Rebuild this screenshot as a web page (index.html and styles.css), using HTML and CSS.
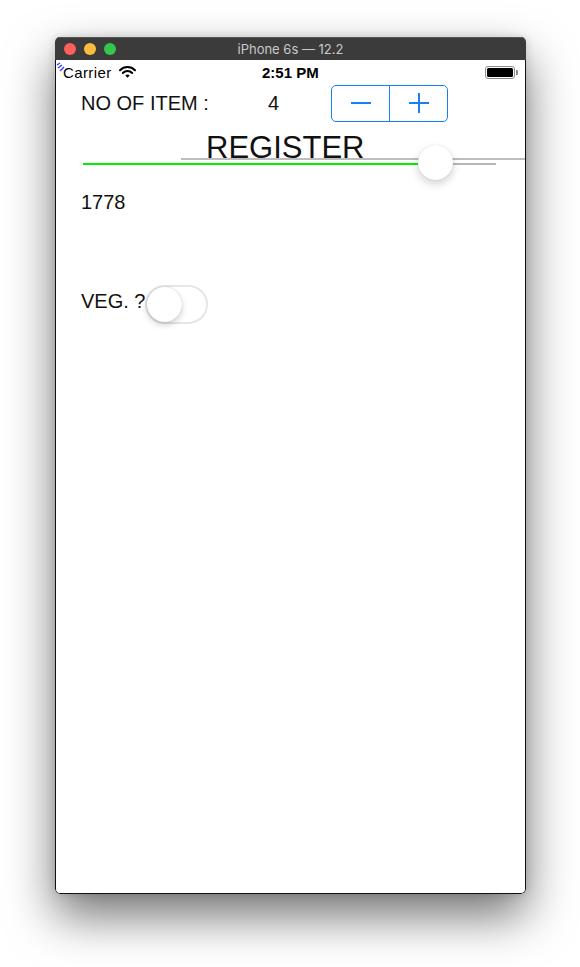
FILE: index.html
```html
<!DOCTYPE html>
<html>
<head>
<meta charset="utf-8">
<link rel="stylesheet" href="styles.css">
</head>
<body>
<div class="window">
  <div class="titlebar">
    <div class="lights">
      <span class="light red"></span>
      <span class="light yellow"></span>
      <span class="light green"></span>
    </div>
    <div class="title">iPhone 6s — 12.2</div>
  </div>
  <div class="screen">
    <svg class="debug-mark" width="12" height="12" viewBox="0 0 12 12">
      <path d="M1 5 L4 3 M2 8 L6 5 M4 11 L8 7" stroke="#2f3cff" stroke-width="1.4" fill="none"/>
    </svg>
    <div class="statusbar">
      <div class="status-left">
        <span class="carrier">Carrier</span>
        <svg class="wifi" width="17" height="12" viewBox="0 0 17 12">
          <path d="M1 4.2 A10.5 10.5 0 0 1 16 4.2" stroke="#000" stroke-width="2" fill="none" stroke-linecap="round"/>
          <path d="M3.8 7 A6.6 6.6 0 0 1 13.2 7" stroke="#000" stroke-width="2" fill="none" stroke-linecap="round"/>
          <path d="M6.3 9.6 L8.5 11.8 L10.7 9.6 A3.1 3.1 0 0 0 6.3 9.6 Z" fill="#000"/>
        </svg>
      </div>
      <div class="time">2:51 PM</div>
      <div class="status-right">
        <div class="battery"><div class="battery-fill"></div></div>
        <div class="battery-tip"></div>
      </div>
    </div>

    <div class="item-row">
      <div class="item-label">NO OF ITEM :</div>
      <div class="item-count">4</div>
      <div class="stepper">
        <div class="step-btn minus"><span class="bar-h"></span></div>
        <div class="step-btn plus"><span class="bar-h"></span><span class="bar-v"></span></div>
      </div>
    </div>

    <div class="register">
      <div class="register-text">REGISTER</div>
      <div class="line-upper"></div>
      <div class="track-min"></div>
      <div class="track-max"></div>
      <div class="thumb"></div>
    </div>

    <div class="total">1778</div>

    <div class="veg-row">
      <div class="veg-label">VEG. ?</div>
      <div class="switch"><div class="knob"></div></div>
    </div>
  </div>
</div>
</body>
</html>
```
FILE: styles.css
```css
html, body {
  margin: 0;
  padding: 0;
  background: #fff;
}
body {
  width: 580px;
  height: 967px;
  overflow: hidden;
  font-family: "Liberation Sans", Arial, sans-serif;
}
.window {
  margin: 37px 0 0 55px;
  width: 471px;
  height: 857px;
  border-radius: 5px;
  box-shadow: 0 22px 48px rgba(0,0,0,0.55), 0 0 10px rgba(0,0,0,0.15);
  background: #fff;
  display: flex;
  flex-direction: column;
  overflow: hidden;
}
.titlebar {
  height: 23px;
  background: #3b3b3b;
  border-top: 1px solid #555;
  box-sizing: border-box;
  display: flex;
  align-items: center;
  position: relative;
}
.lights {
  display: flex;
  gap: 8px;
  padding-left: 9px;
}
.light {
  width: 12px;
  height: 12px;
  border-radius: 50%;
  display: block;
}
.red { background: #fc605b; }
.yellow { background: #fdbc40; }
.green { background: #34c84a; }
.title {
  position: absolute;
  left: 0;
  right: 0;
  top: 3px;
  text-align: center;
  color: #c9c9c9;
  font-family: "Inter", "Liberation Sans", sans-serif;
  font-size: 13px;
  line-height: 17px;
}
.screen {
  flex: 1;
  border: 1px solid #111;
  border-top: none;
  border-radius: 0 0 5px 5px;
  position: relative;
  overflow: hidden;
  background: #fff;
}
.debug-mark {
  position: absolute;
  left: 0;
  top: 0;
}
.statusbar {
  height: 25px;
  display: flex;
  align-items: center;
  justify-content: space-between;
  padding: 0 7px 0 7px;
  position: relative;
}
.status-left {
  display: flex;
  align-items: center;
  gap: 7px;
}
.carrier {
  font-size: 15px;
  letter-spacing: 0.4px;
  color: #000;
}
.wifi { margin-top: -2px; }
.time {
  position: absolute;
  left: 206px;
  top: 4px;
  font-weight: bold;
  font-size: 15px;
  line-height: 18px;
  color: #000;
}
.status-right {
  display: flex;
  align-items: center;
}
.battery {
  width: 30px;
  height: 13px;
  box-sizing: border-box;
  border: 1px solid #8a8a8a;
  border-radius: 3px;
  padding: 1px;
}
.battery-fill {
  width: 100%;
  height: 100%;
  background: #000;
  border-radius: 1.5px;
}
.battery-tip {
  width: 2px;
  height: 5px;
  background: #8a8a8a;
  border-radius: 0 1px 1px 0;
  margin-left: 1px;
}
.item-row {
  display: flex;
  align-items: center;
  height: 36px;
  padding-left: 25px;
}
.item-label {
  width: 187px;
  font-size: 20px;
  color: #111;
}
.item-count {
  width: 63px;
  font-size: 20px;
  color: #111;
}
.stepper {
  width: 117px;
  height: 37px;
  box-sizing: border-box;
  border: 1px solid #1a7ff6;
  border-radius: 5px;
  display: flex;
}
.step-btn {
  flex: 1;
  position: relative;
}
.step-btn.minus {
  border-right: 1px solid #1a7ff6;
}
.bar-h {
  position: absolute;
  left: 50%;
  top: 50%;
  width: 20px;
  height: 2px;
  margin: -1px 0 0 -10px;
  background: #1a7ff6;
}
.bar-v {
  position: absolute;
  left: 50%;
  top: 50%;
  width: 2px;
  height: 20px;
  margin: -10px 0 0 -1px;
  background: #1a7ff6;
}
.register {
  position: relative;
  height: 61px;
  margin-top: 8px;
}
.register-text {
  padding-left: 150px;
  padding-top: 2px;
  font-size: 31px;
  line-height: 34px;
  color: #111;
}
.line-upper {
  position: absolute;
  left: 125px;
  right: -10px;
  top: 29px;
  height: 2px;
  background: #bdbdbd;
}
.track-min {
  position: absolute;
  left: 27px;
  width: 340px;
  top: 34px;
  height: 2px;
  background: #00f000;
}
.track-max {
  position: absolute;
  left: 367px;
  width: 73px;
  top: 34px;
  height: 2px;
  background: #b8b8b8;
}
.thumb {
  position: absolute;
  left: 362px;
  top: 16px;
  width: 35px;
  height: 35px;
  border-radius: 50%;
  background: #fff;
  box-shadow: 0 4px 8px rgba(0,0,0,0.18), 0 0 1px rgba(0,0,0,0.2);
}
.total {
  padding-left: 25px;
  font-size: 20px;
  line-height: 25px;
  color: #111;
}
.veg-row {
  display: flex;
  align-items: flex-start;
  margin-top: 70px;
  padding-left: 25px;
}
.veg-label {
  width: 64px;
  margin-top: 4px;
  font-size: 20px;
  line-height: 25px;
  color: #111;
  white-space: nowrap;
}
.switch {
  width: 63px;
  height: 39px;
  box-sizing: border-box;
  border: 2px solid #e6e6e6;
  border-radius: 20px;
  position: relative;
  background: #fff;
}
.knob {
  position: absolute;
  left: 0;
  top: 0;
  width: 35px;
  height: 35px;
  border-radius: 50%;
  background: #fff;
  box-shadow: 0 3px 6px rgba(0,0,0,0.18), 0 0 1px rgba(0,0,0,0.25);
}
```
